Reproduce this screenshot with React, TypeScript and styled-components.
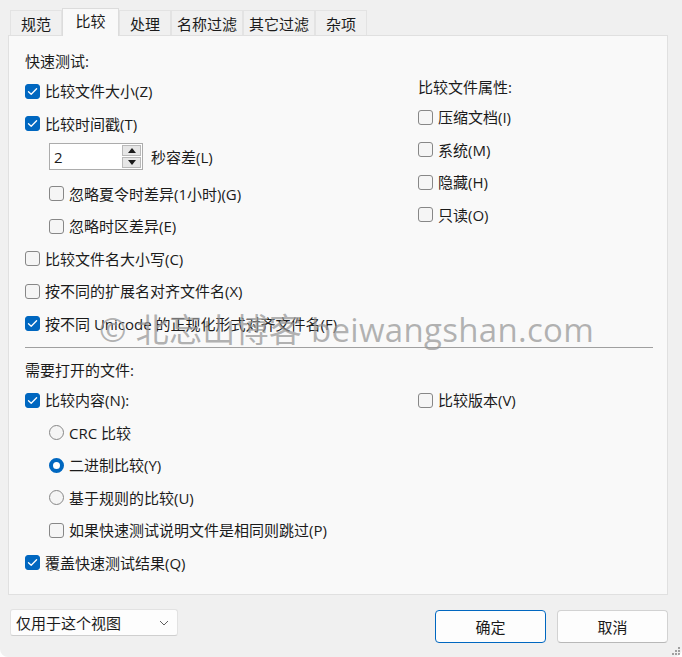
import React from "react";
import styled, { createGlobalStyle, css } from "styled-components";

const Global = createGlobalStyle`
  html, body { margin: 0; padding: 0; background: #ffffff; }
  body { font-family: "Open Sans", "Noto Sans CJK SC", sans-serif; }
  * { box-sizing: border-box; }
`;

const FONT = `"Open Sans", "Noto Sans CJK SC", sans-serif`;

const Window = styled.div`
  position: relative;
  width: 682px;
  height: 657px;
  background: #f0f0f0;
  border-radius: 0 0 8px 8px;
  padding: 8px 14px 0 8px;
  display: flex;
  flex-direction: column;
  font-family: ${FONT};
  font-size: 15px;
  color: #1b1b1b;
  overflow: hidden;
`;

const TabBar = styled.div`
  display: flex;
  align-items: flex-end;
  height: 27px;
  margin-left: 2px;
  position: relative;
  z-index: 2;
`;

const Tab = styled.div<{ $w: number; $active?: boolean }>`
  width: ${(p) => p.$w}px;
  height: 25px;
  border: 1px solid #e3e3e3;
  border-bottom: none;
  background: #f0f0f0;
  display: flex;
  align-items: center;
  justify-content: center;
  line-height: 20px;
  padding-top: 1px;
  ${(p) =>
    p.$active &&
    css`
      height: 28px;
      margin-bottom: -1px;
      background: #f9f9f9;
      border-color: #dcdcdc;
      padding-top: 0;
      padding-bottom: 3px;
    `}
`;

const Panel = styled.div`
  width: 660px;
  height: 560px;
  background: #f9f9f9;
  border: 1px solid #e0e0e0;
  padding: 15px 14px 0 16px;
  display: flex;
  flex-direction: column;
`;

const Section = styled.div`
  display: grid;
  grid-template-columns: 393px 1fr;
`;

const Column = styled.div<{ $top?: number }>`
  display: flex;
  flex-direction: column;
  padding-top: ${(p) => p.$top ?? 0}px;
`;

const Heading = styled.div`
  height: 20px;
  line-height: 20px;
  margin-bottom: 4px;
  white-space: nowrap;
`;

const Row = styled.div<{ $indent?: number; $h?: number }>`
  height: ${(p) => p.$h ?? 32.5}px;
  display: flex;
  align-items: center;
  gap: 5px;
  padding-left: ${(p) => p.$indent ?? 0}px;
  white-space: nowrap;
  line-height: 20px;
`;

const SpinRow = styled.div`
  height: 37.5px;
  display: flex;
  align-items: flex-start;
  gap: 8px;
  padding-left: 24px;
  padding-top: 3px;
  white-space: nowrap;
`;

const Box = styled.span<{ $on?: boolean }>`
  width: 15px;
  height: 15px;
  flex: none;
  border-radius: 3px;
  border: 1px solid ${(p) => (p.$on ? "#0067c0" : "#878787")};
  background: ${(p) => (p.$on ? "#0067c0" : "#f5f5f5")};
  display: flex;
  align-items: center;
  justify-content: center;
`;

const Radio = styled.span<{ $on?: boolean }>`
  width: 15px;
  height: 15px;
  flex: none;
  border-radius: 50%;
  ${(p) =>
    p.$on
      ? css`
          border: 4px solid #0067c0;
          background: #ffffff;
        `
      : css`
          border: 1px solid #878787;
          background: #f5f5f5;
        `}
`;

const Spin = styled.div`
  width: 94px;
  height: 27px;
  border: 1px solid #acacac;
  background: #ffffff;
  display: flex;
  align-items: center;
  justify-content: space-between;
  padding: 1px 1px 1px 4px;
`;

const SpinValue = styled.span`
  font-size: 15px;
  line-height: 20px;
`;

const SpinButtons = styled.div`
  width: 19px;
  height: 100%;
  display: flex;
  flex-direction: column;
  gap: 1px;
`;

const SpinBtn = styled.div`
  flex: 1;
  background: #e6e6e6;
  border: 1px solid #b9b9b9;
  display: flex;
  align-items: center;
  justify-content: center;
`;

const SpinLabel = styled.span`
  line-height: 29px;
`;

const Separator = styled.div`
  height: 1px;
  background: #a0a0a0;
  margin: 7px 0 12px 0;
  width: 628px;
`;

const Footer = styled.div`
  display: flex;
  justify-content: space-between;
  align-items: flex-start;
  margin-top: 14px;
`;

const Select = styled.div`
  width: 168px;
  height: 27px;
  margin-left: 2px;
  background: #fdfdfd;
  border: 1px solid #e2e2e2;
  border-bottom-color: #cfcfcf;
  border-radius: 3px;
  display: flex;
  align-items: center;
  justify-content: space-between;
  padding: 0 8px 0 5px;
  line-height: 20px;
`;

const Buttons = styled.div`
  display: flex;
  gap: 11px;
  margin-top: 1px;
`;

const Button = styled.div<{ $primary?: boolean }>`
  width: 111px;
  height: 33px;
  border-radius: 4px;
  background: #fdfdfd;
  border: 1px solid ${(p) => (p.$primary ? "#0067c0" : "#d2d2d2")};
  ${(p) => !p.$primary && css`border-bottom-color: #b8b8b8;`}
  display: flex;
  align-items: center;
  justify-content: center;
  line-height: 20px;
`;

const Grip = styled.svg`
  position: absolute;
  right: 1px;
  bottom: 1px;
`;

const Watermark = styled.div`
  position: absolute;
  left: 99px;
  top: 308px;
  font-family: "Open Sans", "Noto Sans CJK SC", sans-serif;
  font-size: 33px;
  line-height: 44px;
  color: rgba(150, 150, 150, 0.72);
  white-space: nowrap;
  pointer-events: none;
  letter-spacing: 0.3px;
`;

const Check = () => (
  <svg width="11" height="9" viewBox="0 0 11 9">
    <path d="M1.5 4.8 L4.2 7.3 L9.6 1.8" fill="none" stroke="#ffffff" strokeWidth="1.3" strokeLinecap="round" strokeLinejoin="round" />
  </svg>
);

const CheckItem: React.FC<{ on?: boolean; indent?: number; children: React.ReactNode }> = ({ on, indent, children }) => (
  <Row $indent={indent}>
    <Box $on={on}>{on && <Check />}</Box>
    <span>{children}</span>
  </Row>
);

const RadioItem: React.FC<{ on?: boolean; children: React.ReactNode }> = ({ on, children }) => (
  <Row $indent={24}>
    <Radio $on={on} />
    <span>{children}</span>
  </Row>
);

const tabs: { label: string; w: number; active?: boolean }[] = [
  { label: "规范", w: 52 },
  { label: "比较", w: 57, active: true },
  { label: "处理", w: 52 },
  { label: "名称过滤", w: 72 },
  { label: "其它过滤", w: 72 },
  { label: "杂项", w: 52 },
];

export default function App() {
  return (
    <>
      <Global />
      <Window>
        <TabBar>
          {tabs.map((t) => (
            <Tab key={t.label} $w={t.w} $active={t.active}>
              {t.label}
            </Tab>
          ))}
        </TabBar>
        <Panel>
          <Section>
            <Column>
              <Heading>快速测试:</Heading>
              <CheckItem on>比较文件大小(Z)</CheckItem>
              <CheckItem on>比较时间戳(T)</CheckItem>
              <SpinRow>
                <Spin>
                  <SpinValue>2</SpinValue>
                  <SpinButtons>
                    <SpinBtn>
                      <svg width="8" height="5" viewBox="0 0 8 5">
                        <path d="M0 5 L4 0 L8 5 Z" fill="#1b1b1b" />
                      </svg>
                    </SpinBtn>
                    <SpinBtn>
                      <svg width="8" height="5" viewBox="0 0 8 5">
                        <path d="M0 0 L8 0 L4 5 Z" fill="#1b1b1b" />
                      </svg>
                    </SpinBtn>
                  </SpinButtons>
                </Spin>
                <SpinLabel>秒容差(L)</SpinLabel>
              </SpinRow>
              <CheckItem indent={24}>忽略夏令时差异(1小时)(G)</CheckItem>
              <CheckItem indent={24}>忽略时区差异(E)</CheckItem>
              <CheckItem>比较文件名大小写(C)</CheckItem>
              <CheckItem>按不同的扩展名对齐文件名(X)</CheckItem>
              <CheckItem on>按不同 Unicode 的正规化形式对齐文件名(F)</CheckItem>
            </Column>
            <Column $top={26}>
              <Heading>比较文件属性:</Heading>
              <CheckItem>压缩文档(I)</CheckItem>
              <CheckItem>系统(M)</CheckItem>
              <CheckItem>隐藏(H)</CheckItem>
              <CheckItem>只读(O)</CheckItem>
            </Column>
          </Section>
          <Separator />
          <Section>
            <Column>
              <Heading>需要打开的文件:</Heading>
              <CheckItem on>比较内容(N):</CheckItem>
              <RadioItem>CRC 比较</RadioItem>
              <RadioItem on>二进制比较(Y)</RadioItem>
              <RadioItem>基于规则的比较(U)</RadioItem>
              <CheckItem indent={24}>如果快速测试说明文件是相同则跳过(P)</CheckItem>
              <CheckItem on>覆盖快速测试结果(Q)</CheckItem>
            </Column>
            <Column $top={24}>
              <CheckItem>比较版本(V)</CheckItem>
            </Column>
          </Section>
        </Panel>
        <Footer>
          <Select>
            <span>仅用于这个视图</span>
            <svg width="10" height="6" viewBox="0 0 10 6">
              <path d="M1 1 L5 5 L9 1" fill="none" stroke="#5f5f5f" strokeWidth="1" />
            </svg>
          </Select>
          <Buttons>
            <Button $primary>确定</Button>
            <Button>取消</Button>
          </Buttons>
        </Footer>
        <Grip width="10" height="10" viewBox="0 0 10 10">
          <rect x="7" y="1" width="2" height="2" fill="#a0a0a0" />
          <rect x="4" y="4" width="2" height="2" fill="#a0a0a0" />
          <rect x="7" y="4" width="2" height="2" fill="#a0a0a0" />
          <rect x="1" y="7" width="2" height="2" fill="#a0a0a0" />
          <rect x="4" y="7" width="2" height="2" fill="#a0a0a0" />
          <rect x="7" y="7" width="2" height="2" fill="#a0a0a0" />
        </Grip>
        <Watermark>© 北忘山博客 beiwangshan.com</Watermark>
      </Window>
    </>
  );
}
